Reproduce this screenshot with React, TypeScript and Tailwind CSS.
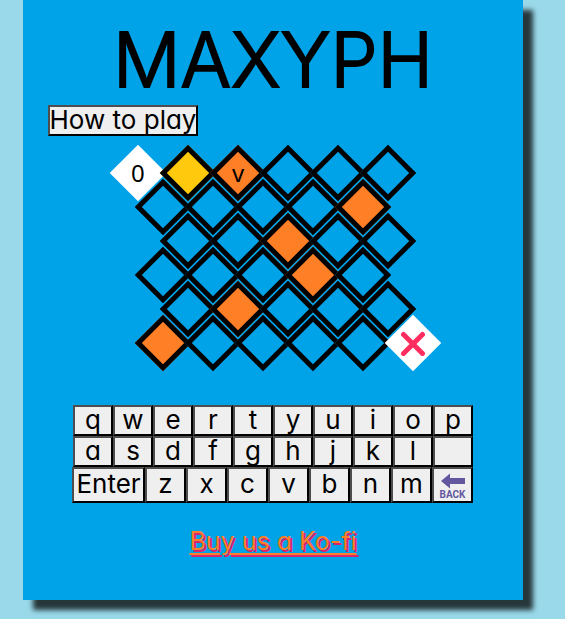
type TileKind = "empty" | "start" | "current" | "path" | "end";

type Tile = { kind: TileKind; text?: string };

const e: Tile = { kind: "empty" };
const p: Tile = { kind: "path" };

const board: { indent: string; tiles: Tile[] }[] = [
  {
    indent: "",
    tiles: [{ kind: "start", text: "0" }, { kind: "current" }, { kind: "path", text: "v" }, e, e, e],
  },
  { indent: "pl-[25px]", tiles: [e, e, e, e, p] },
  { indent: "pl-[50px]", tiles: [e, e, p, e, e] },
  { indent: "pl-[25px]", tiles: [e, e, e, p, e] },
  { indent: "pl-[50px]", tiles: [e, p, e, e, e] },
  { indent: "pl-[25px]", tiles: [p, e, e, e, e, { kind: "end" }] },
];

const tileStyle: Record<TileKind, string> = {
  empty: "border-5 border-black bg-[#00a2e8]",
  start: "bg-white",
  current: "border-5 border-black bg-[#ffc90e]",
  path: "border-5 border-black bg-[#ff7f27]",
  end: "bg-white",
};

const keyStyle =
  "flex shrink-0 items-center justify-center border-2 border-t-[#4d4d4d] border-l-[#4d4d4d] border-r-black border-b-black bg-[#efefef] text-[26px] leading-6 text-black";

function Cross() {
  return (
    <svg viewBox="0 0 26 26" className="size-[26px]" aria-label="Goal">
      <path d="M3.5 4.5 L22.5 23.5 M22.5 4.5 L3.5 23.5" stroke="#ff2d5f" strokeWidth="5" strokeLinecap="round" fill="none" />
    </svg>
  );
}

function BoardTile({ tile }: { tile: Tile }) {
  return (
    <div className={`flex size-10 shrink-0 rotate-45 items-center justify-center ${tileStyle[tile.kind]}`}>
      <div className="-rotate-45 font-['Noto_Sans',sans-serif] text-2xl leading-6">
        {tile.kind === "end" ? <Cross /> : tile.text}
      </div>
    </div>
  );
}

function Key({ label, size }: { label: string; size: string }) {
  return (
    <button type="button" aria-label={label || "blank"} className={`${keyStyle} pb-0.5 ${size}`}>
      {label}
    </button>
  );
}

export default function App() {
  return (
    <div className="min-h-screen bg-[#99d9ea] pr-[19px] font-['Inter','Liberation_Sans',sans-serif] [font-feature-settings:'cv11']">
      <main className="mx-auto flex w-full max-w-[500px] flex-col items-center bg-[#00a2e8] pb-[43px] text-black shadow-[10px_10px_5px_rgba(0,0,0,0.75)]">
        <h1 className="pt-5 text-[75px] leading-[80px] font-light [-webkit-text-stroke:2px_black] [stroke-linejoin:round]">
          MAXYPH
        </h1>
        <button
          type="button"
          className={`${keyStyle} mt-[5px] ml-[25px] h-[31px] w-[150px] self-start pb-0.5 whitespace-nowrap`}
        >
          How to play
        </button>

        <section aria-label="Board" className="mt-[17px] w-[310px] space-y-[-6px]">
          {board.map((row, r) => (
            <div key={r} className={`flex gap-2.5 ${row.indent}`}>
              {row.tiles.map((tile, c) => (
                <BoardTile key={c} tile={tile} />
              ))}
            </div>
          ))}
        </section>

        <section aria-label="Keyboard" className="mt-[42px] w-[400px]">
          <div className="flex">
            {[..."qwertyuiop"].map((k) => (
              <Key key={k} label={k} size="h-[31px] w-10" />
            ))}
          </div>
          <div className="flex">
            {[..."asdfghjkl", ""].map((k) => (
              <Key key={k} label={k} size="h-[31px] w-10" />
            ))}
          </div>
          <div className="flex justify-end">
            <Key label="Enter" size="h-9 w-[73px]" />
            {[..."zxcvbnm"].map((k) => (
              <Key key={k} label={k} size="h-9 w-[41px]" />
            ))}
            <button type="button" className={`${keyStyle} h-9 w-[41px] flex-col pt-1`}>
              <svg viewBox="0 0 24 16" className="h-4 w-6" aria-hidden="true">
                <path d="M0 8 L9 0.5 V5 H24 V11 H9 V15.5 Z" fill="#6358a0" />
              </svg>
              <span className="font-['Roboto',sans-serif] text-[10px] leading-3 font-bold text-[#6358a0]">BACK</span>
            </button>
          </div>
        </section>

        <a
          href="#kofi"
          className="mt-[22px] text-[25px] leading-8 text-[#ff7f27] underline decoration-2 underline-offset-3 [text-shadow:2px_2px_#d6246e]"
        >
          Buy us a Ko-fi
        </a>
      </main>
    </div>
  );
}
